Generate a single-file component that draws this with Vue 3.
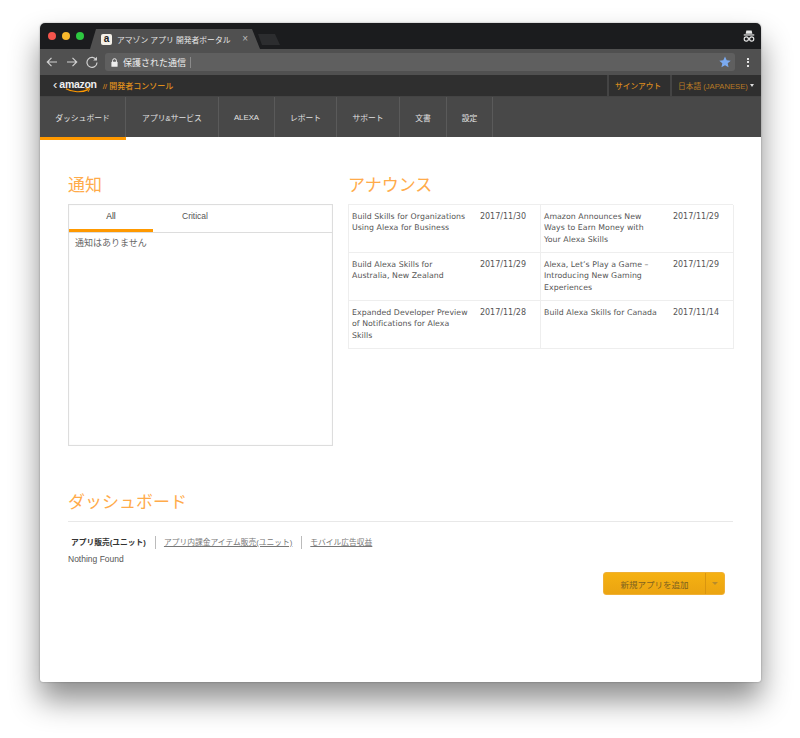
<script setup>
const navItems = ['ダッシュボード', 'アプリ&サービス', 'ALEXA', 'レポート', 'サポート', '文書', '設定']
const news = [
  ['Build Skills for Organizations Using Alexa for Business', '2017/11/30', 'Amazon Announces New Ways to Earn Money with Your Alexa Skills', '2017/11/29'],
  ['Build Alexa Skills for Australia, New Zealand', '2017/11/29', 'Alexa, Let’s Play a Game – Introducing New Gaming Experiences', '2017/11/29'],
  ['Expanded Developer Preview of Notifications for Alexa Skills', '2017/11/28', 'Build Alexa Skills for Canada', '2017/11/14'],
]
</script>

<template>
  <div class="page">
    <div class="window">
      <div class="tabstrip">
        <div class="lights">
          <span class="light red"></span>
          <span class="light yellow"></span>
          <span class="light green"></span>
        </div>
        <div class="tab">
          <span class="favicon">a</span>
          <span class="tab-title">アマゾン アプリ 開発者ポータル</span>
          <span class="tab-close">×</span>
        </div>
        <div class="ghost-tab"></div>
        <svg class="incognito" width="12" height="12" viewBox="0 0 16 16">
          <path d="M4.500 0.500h7l1 4.500h-9z" fill="#e8e8e8" />
          <rect x="1" y="5.800" width="14" height="1.600" fill="#e8e8e8" />
          <circle cx="4.400" cy="12" r="2.800" fill="none" stroke="#e8e8e8" stroke-width="1.500" />
          <circle cx="11.600" cy="12" r="2.800" fill="none" stroke="#e8e8e8" stroke-width="1.500" />
          <path d="M7 11.500h2" stroke="#e8e8e8" stroke-width="1" />
        </svg>
      </div>

      <div class="toolbar">
        <svg class="tool" width="12" height="12" viewBox="0 0 12 12">
          <path d="M11 6H1.500M5.500 1.800 1.300 6l4.200 4.200" fill="none" stroke="#d0d0d0" stroke-width="1.200" />
        </svg>
        <svg class="tool" width="12" height="12" viewBox="0 0 12 12">
          <path d="M1 6h9.500M6.500 1.800 10.700 6l-4.200 4.200" fill="none" stroke="#d0d0d0" stroke-width="1.200" />
        </svg>
        <svg class="tool" width="12" height="12" viewBox="0 0 12 12">
          <path d="M10.400 4A5 5 0 1 0 11 6.500" fill="none" stroke="#d0d0d0" stroke-width="1.200" />
          <path d="M11 0.800V4.600H7.200z" fill="#d0d0d0" />
        </svg>
        <div class="omnibox">
          <svg width="7" height="9" viewBox="0 0 7 9">
            <path d="M1.600 4V2.600a1.900 1.900 0 0 1 3.800 0V4" fill="none" stroke="#eee" stroke-width="1" />
            <rect x="0.400" y="3.800" width="6.200" height="5" rx="0.600" fill="#eee" />
          </svg>
          <span class="secure">保護された通信</span>
          <span class="omni-sep"></span>
          <svg class="star" width="12" height="12" viewBox="0 0 24 24">
            <path d="M12 1l3.400 7.400 8 .9-6 5.400 1.700 8L12 18.600 4.900 22.700l1.700-8-6-5.400 8-.9z" fill="#7baaf0" />
          </svg>
        </div>
        <div class="dots"><i></i><i></i><i></i></div>
      </div>

      <div class="topbar">
        <div class="brand">
          <span class="chev">‹</span>
          <span class="logo">amazon
            <svg class="smile" width="26" height="5" viewBox="0 0 26 5">
              <path d="M1 0.800C7 4.400 17 4.800 23 1.600" fill="none" stroke="#ff9900" stroke-width="1.200" />
              <path d="M20.500 .6l4 .2-1.300 3" fill="none" stroke="#ff9900" stroke-width="1" />
            </svg>
          </span>
          <span class="console">// 開発者コンソール</span>
        </div>
        <a class="top-link signout">サインアウト</a>
        <a class="top-link lang">日本語 (JAPANESE) <span class="caret"></span></a>
      </div>

      <nav class="nav">
        <a v-for="(item, i) in navItems" :key="item" class="nav-item" :class="{ active: i === 0 }">{{ item }}</a>
      </nav>

      <main class="content">
        <div class="columns">
          <section class="notices">
            <h2 class="title">通知</h2>
            <div class="notice-box">
              <div class="notice-tabs">
                <span class="notice-tab on">All</span>
                <span class="notice-tab">Critical</span>
              </div>
              <p class="notice-empty">通知はありません</p>
            </div>
          </section>
          <section class="announce">
            <h2 class="title">アナウンス</h2>
            <div class="news">
              <template v-for="row in news" :key="row[0]">
                <div class="news-cell">
                  <span class="news-text">{{ row[0] }}</span>
                  <span class="news-date">{{ row[1] }}</span>
                </div>
                <div class="news-cell">
                  <span class="news-text">{{ row[2] }}</span>
                  <span class="news-date">{{ row[3] }}</span>
                </div>
              </template>
            </div>
          </section>
        </div>

        <section class="dash">
          <h2 class="title dash-title">ダッシュボード</h2>
          <div class="dash-tabs">
            <span class="dash-tab bold">アプリ販売(ユニット)</span>
            <span class="dash-tab">アプリ内課金アイテム販売(ユニット)</span>
            <span class="dash-tab">モバイル広告収益</span>
          </div>
          <p class="nothing">Nothing Found</p>
          <div class="actions">
            <div class="split">
              <span class="split-main">新規アプリを追加</span>
              <span class="split-arrow"><i></i></span>
            </div>
          </div>
        </section>
      </main>
    </div>
  </div>
</template>

<style scoped>
.page {
  width: 800px;
  height: 738px;
  padding: 23px 39px 0 40px;
  box-sizing: border-box;
  overflow: hidden;
  background: #fff;
  font-family: "Liberation Sans", "Noto Sans CJK JP", sans-serif;
}
.window {
  height: 659px;
  background: #fff;
  border-radius: 5px 5px 3px 3px;
  box-shadow: 0 0 2px rgba(0, 0, 0, 0.35), 0 18px 30px rgba(0, 0, 0, 0.45);
  display: flex;
  flex-direction: column;
  overflow: hidden;
}
.tabstrip {
  height: 26px;
  background: #1b1c1e;
  display: flex;
  align-items: flex-end;
  flex: none;
}
.lights {
  display: flex;
  gap: 6px;
  align-self: flex-start;
  padding: 9px 0 0 8px;
  width: 50px;
  box-sizing: border-box;
  flex: none;
}
.light { width: 8px; height: 8px; border-radius: 50%; }
.red { background: #f4544c; }
.yellow { background: #f8b82c; }
.green { background: #2dc840; }
.tab {
  width: 170px;
  height: 20px;
  box-sizing: border-box;
  background: #505050;
  clip-path: polygon(0 100%, 6px 0, 162px 0, 170px 100%);
  display: flex;
  align-items: center;
  padding: 0 12px 0 11px;
  flex: none;
}
.favicon {
  width: 11px;
  height: 11px;
  border-radius: 2px;
  background: #f4f0e8;
  color: #222;
  font-size: 10px;
  font-weight: 700;
  line-height: 10px;
  text-align: center;
  flex: none;
  margin-right: 5px;
}
.tab-title {
  color: #e8e8e8;
  font-size: 7.800px;
  white-space: nowrap;
  flex: 1;
}
.tab-close { color: #bbb; font-size: 10px; line-height: 1; }
.ghost-tab {
  width: 22px;
  height: 11px;
  margin: 0 0 4px -2px;
  background: #2c2d2f;
  clip-path: polygon(0 0, 17px 0, 22px 100%, 4px 100%);
  flex: none;
}
.incognito { margin: 0 6px 7px auto; align-self: flex-end; flex: none; }
.toolbar {
  height: 26px;
  background: #505050;
  display: flex;
  align-items: center;
  padding: 0 12px 0 6px;
  gap: 8px;
  flex: none;
  box-sizing: border-box;
}
.tool { flex: none; }
.omnibox {
  flex: 1;
  height: 18px;
  margin-left: -1px;
  background: #5f5f5f;
  border-radius: 3px;
  display: flex;
  align-items: center;
  padding: 0 4px 0 6px;
  gap: 5px;
}
.secure { color: #eee; font-size: 9px; white-space: nowrap; }
.omni-sep { width: 1px; height: 11px; background: #8a8a8a; margin-left: -1px; }
.star { margin-left: auto; }
.dots { display: flex; flex-direction: column; gap: 1.500px; margin: 0 0 0 4px; }
.dots i { width: 2px; height: 2px; background: #e4e4e4; display: block; }
.topbar {
  height: 22px;
  background: #2f2f2f;
  border-bottom: 1px solid #444;
  box-sizing: border-box;
  display: flex;
  align-items: stretch;
  flex: none;
}
.brand {
  display: flex;
  align-items: center;
  padding-left: 13px;
  flex: 1;
}
.chev { color: #eee; font-size: 13px; line-height: 1; margin-top: -3px; margin-right: 2px; }
.logo {
  position: relative;
  color: #eee;
  font-size: 10.500px;
  font-weight: 700;
  letter-spacing: -0.300px;
  margin-top: -3px;
}
.smile { position: absolute; left: 6px; top: 10px; }
.console { color: #e08f1c; font-size: 8px; font-weight: 500; margin-left: 6px; white-space: nowrap; }
.top-link {
  color: #d98a1e;
  font-size: 7.700px;
  font-weight: 500;
  display: flex;
  align-items: center;
  border-left: 2px solid #444;
  white-space: nowrap;
  box-sizing: border-box;
}
.signout { width: 63px; padding-left: 6px; }
.lang { width: 91px; padding-left: 6px; color: #b87a25; font-weight: 400; }
.caret {
  width: 0; height: 0;
  border: 2.500px solid transparent;
  border-top: 3px solid #ddd;
  border-bottom: 0;
  margin-left: 2px;
}
.nav {
  height: 40px;
  background: #484848;
  display: grid;
  grid-template-columns: 86px 93px 56px 62px 63px 47px 46px;
  flex: none;
  position: relative;
  margin-bottom: 3px;
}
.nav-item {
  color: #e2e2e2;
  font-size: 7.800px;
  display: flex;
  align-items: center;
  justify-content: center;
  border-right: 1px solid #5a5a5a;
  white-space: nowrap;
  position: relative;
}
.nav-item.active::after {
  content: "";
  position: absolute;
  left: 0;
  right: -1px;
  top: 100%;
  height: 3px;
  background: #ff9900;
}
.content {
  flex: 1;
  padding: 0 28px;
  color: #555;
}
.columns {
  display: grid;
  grid-template-columns: 265px 385px;
  gap: 15px;
  padding-top: 33px;
}
.title {
  margin: 0;
  height: 31px;
  color: #ffab4a;
  font-size: 17px;
  font-weight: 400;
  line-height: 26px;
}
.notice-box {
  height: 242px;
  box-sizing: border-box;
  border: 1px solid #ddd;
  box-shadow: inset 0 0 1px #ddd;
}
.notice-tabs {
  display: flex;
  height: 27px;
  border-bottom: 1px solid #ddd;
}
.notice-tab {
  width: 84px;
  height: 27px;
  box-sizing: border-box;
  padding-top: 6px;
  text-align: center;
  font-size: 8.500px;
  color: #555;
}
.notice-tab.on { border-bottom: 3px solid #ff9900; color: #333; }
.notice-empty {
  margin: 4px 0 0 6px;
  font-size: 9px;
  color: #666;
  line-height: 12px;
}
.news {
  display: grid;
  grid-template-columns: 192px 193px;
  grid-auto-rows: 48px;
  border-top: 1px solid #eee;
  border-left: 1px solid #eee;
  box-sizing: border-box;
}
.news-cell {
  display: flex;
  justify-content: space-between;
  padding: 6px 14px 0 3px;
  border-bottom: 1px solid #eee;
  border-right: 1px solid #eee;
  box-sizing: border-box;
  font-family: "DejaVu Sans", sans-serif;
  font-size: 8px;
  line-height: 11.300px;
  color: #555;
}
.news-text { width: 117px; font-size: 7.800px; letter-spacing: 0.050px; }
.dash { padding-top: 44px; }
.dash-title {
  border-bottom: 1px solid #e8e8e8;
  box-sizing: content-box;
}
.dash-tabs {
  display: flex;
  align-items: center;
  padding: 14px 0 0 3px;
}
.dash-tab {
  font-size: 7.750px;
  color: #777;
  text-decoration: underline;
  padding: 0 9px 0 8px;
  border-left: 1px solid #bbb;
  line-height: 13px;
}
.dash-tab.bold {
  font-weight: 700;
  color: #333;
  text-decoration: none;
  border-left: 0;
  padding-left: 0;
  padding-right: 9px;
}
.nothing { margin: 4px 0 0; font-size: 8.500px; line-height: 12px; color: #555; }
.actions { display: flex; justify-content: flex-end; padding: 7px 8px 0 0; }
.split {
  width: 122px;
  height: 23px;
  background: linear-gradient(#f5b112, #eba411);
  border: 1px solid #f0b034;
  box-sizing: border-box;
  border-radius: 3px;
  display: flex;
  color: #7d6220;
  font-size: 8.500px;
}
.split-main {
  flex: 1;
  display: flex;
  align-items: center;
  justify-content: center;
  border-right: 1px solid #d9950f;
}
.split-arrow {
  width: 18px;
  display: flex;
  align-items: center;
  justify-content: center;
}
.split-arrow i {
  width: 0; height: 0;
  border: 3px solid transparent;
  border-top: 3px solid #b88b2a;
  border-bottom: 0;
}
</style>
